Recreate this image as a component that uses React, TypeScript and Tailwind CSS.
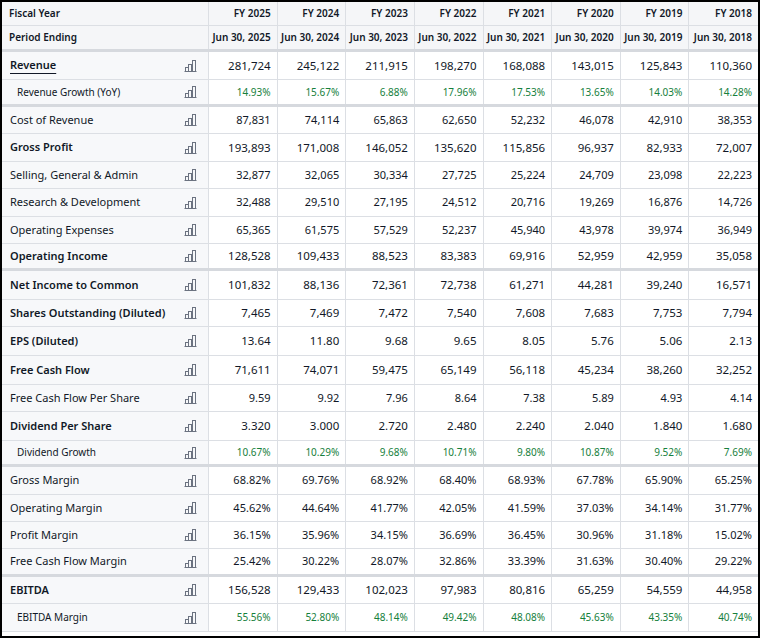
const YEARS = ['2025', '2024', '2023', '2022', '2021', '2020', '2019', '2018'];

type Row = {
    label: string;
    values: string[];
    kind?: 'bold' | 'sub' | 'link';
    h: number;
    sep?: boolean; // thick divider below
};

const ROWS: Row[] = [
    { label: 'Revenue', kind: 'link', h: 28, values: ['281,724', '245,122', '211,915', '198,270', '168,088', '143,015', '125,843', '110,360'] },
    { label: 'Revenue Growth (YoY)', kind: 'sub', h: 27, sep: true, values: ['14.93%', '15.67%', '6.88%', '17.96%', '17.53%', '13.65%', '14.03%', '14.28%'] },
    { label: 'Cost of Revenue', h: 27, values: ['87,831', '74,114', '65,863', '62,650', '52,232', '46,078', '42,910', '38,353'] },
    { label: 'Gross Profit', kind: 'bold', h: 28, values: ['193,893', '171,008', '146,052', '135,620', '115,856', '96,937', '82,933', '72,007'] },
    { label: 'Selling, General & Admin', h: 27, values: ['32,877', '32,065', '30,334', '27,725', '25,224', '24,709', '23,098', '22,223'] },
    { label: 'Research & Development', h: 28, values: ['32,488', '29,510', '27,195', '24,512', '20,716', '19,269', '16,876', '14,726'] },
    { label: 'Operating Expenses', h: 27, values: ['65,365', '61,575', '57,529', '52,237', '45,940', '43,978', '39,974', '36,949'] },
    { label: 'Operating Income', kind: 'bold', h: 27, sep: true, values: ['128,528', '109,433', '88,523', '83,383', '69,916', '52,959', '42,959', '35,058'] },
    { label: 'Net Income to Common', kind: 'bold', h: 29, values: ['101,832', '88,136', '72,361', '72,738', '61,271', '44,281', '39,240', '16,571'] },
    { label: 'Shares Outstanding (Diluted)', kind: 'bold', h: 27, values: ['7,465', '7,469', '7,472', '7,540', '7,608', '7,683', '7,753', '7,794'] },
    { label: 'EPS (Diluted)', kind: 'bold', h: 29, values: ['13.64', '11.80', '9.68', '9.65', '8.05', '5.76', '5.06', '2.13'] },
    { label: 'Free Cash Flow', kind: 'bold', h: 29, values: ['71,611', '74,071', '59,475', '65,149', '56,118', '45,234', '38,260', '32,252'] },
    { label: 'Free Cash Flow Per Share', h: 27, values: ['9.59', '9.92', '7.96', '8.64', '7.38', '5.89', '4.93', '4.14'] },
    { label: 'Dividend Per Share', kind: 'bold', h: 29, values: ['3.320', '3.000', '2.720', '2.480', '2.240', '2.040', '1.840', '1.680'] },
    { label: 'Dividend Growth', kind: 'sub', h: 26, sep: true, values: ['10.67%', '10.29%', '9.68%', '10.71%', '9.80%', '10.87%', '9.52%', '7.69%'] },
    { label: 'Gross Margin', h: 28, values: ['68.82%', '69.76%', '68.92%', '68.40%', '68.93%', '67.78%', '65.90%', '65.25%'] },
    { label: 'Operating Margin', h: 27, values: ['45.62%', '44.64%', '41.77%', '42.05%', '41.59%', '37.03%', '34.14%', '31.77%'] },
    { label: 'Profit Margin', h: 27, values: ['36.15%', '35.96%', '34.15%', '36.69%', '36.45%', '30.96%', '31.18%', '15.02%'] },
    { label: 'Free Cash Flow Margin', h: 28, sep: true, values: ['25.42%', '30.22%', '28.07%', '32.86%', '33.39%', '31.63%', '30.40%', '29.22%'] },
    { label: 'EBITDA', kind: 'bold', h: 27, values: ['156,528', '129,433', '102,023', '97,983', '80,816', '65,259', '54,559', '44,958'] },
    { label: 'EBITDA Margin', kind: 'sub', h: 28, values: ['55.56%', '52.80%', '48.14%', '49.42%', '48.08%', '45.63%', '43.35%', '40.74%'] },
];

const GRID = 'grid grid-cols-[207px_repeat(8,minmax(0,1fr))]';

function ChartIcon() {
    return (
        <svg width="13" height="12" viewBox="0 0 13 12" fill="none" stroke="#6b7280" strokeWidth="1">
            <path d="M0.5 11.5h12" />
            <rect x="1.5" y="7.5" width="3" height="4" />
            <rect x="4.5" y="4.5" width="3" height="7" />
            <rect x="8.5" y="0.5" width="3" height="11" />
        </svg>
    );
}

export default function App() {
    return (
        <div className="w-[760px] h-[638px] bg-black p-[2px] pb-[2px]" style={{ fontFamily: '"Noto Sans", "Open Sans", sans-serif' }}>
            <div className="bg-white w-full h-full overflow-hidden text-[#111827]">
                {/* Header */}
                <div className={`${GRID} h-[24px] bg-[#f5f6f8] border-b border-[#dcdfe4] text-[10px] font-semibold`}>
                    <div className="flex items-center pl-[7px] border-r border-[#dcdfe4]">Fiscal Year</div>
                    {YEARS.map(y => (
                        <div key={y} className="flex items-center justify-end pr-[6px] border-r border-[#dcdfe4] last:border-r-0">FY {y}</div>
                    ))}
                </div>
                <div className={`${GRID} h-[26px] bg-[#f5f6f8] border-b-[3px] border-[#d6d9de] text-[10px] font-semibold`}>
                    <div className="flex items-center pl-[7px] border-r border-[#dcdfe4]">Period Ending</div>
                    {YEARS.map(y => (
                        <div key={y} className="flex items-center justify-end pr-[6px] border-r border-[#dcdfe4] last:border-r-0 whitespace-nowrap">Jun 30, {y}</div>
                    ))}
                </div>

                {ROWS.map(r => {
                    const bold = r.kind === 'bold' || r.kind === 'link';
                    const sub = r.kind === 'sub';
                    return (
                        <div
                            key={r.label}
                            className={`${GRID} ${r.sep ? 'border-b-[3px] border-[#d6d9de]' : 'border-b border-[#dcdfe4]'}`}
                            style={{ height: r.h }}
                        >
                            <div className="flex items-center justify-between bg-[#f7f8fa] border-r border-[#dcdfe4] pr-[11px]">
                                <span
                                    className={`${sub ? 'pl-[15px] text-[10px]' : 'pl-[8px] text-[11px]'} ${bold ? 'font-semibold' : ''} ${r.kind === 'link' ? 'underline decoration-[#111827] underline-offset-[4px]' : ''}`}
                                >
                                    {r.label}
                                </span>
                                <ChartIcon />
                            </div>
                            {r.values.map((v, i) => (
                                <div
                                    key={i}
                                    className={`flex items-center justify-end pr-[6px] border-r border-[#dcdfe4] last:border-r-0 ${sub ? 'text-[10px] text-[#16803c]' : bold ? 'text-[11.5px]' : 'text-[11px]'}`}
                                >
                                    {v}
                                </div>
                            ))}
                        </div>
                    );
                })}
            </div>
        </div>
    );
}
